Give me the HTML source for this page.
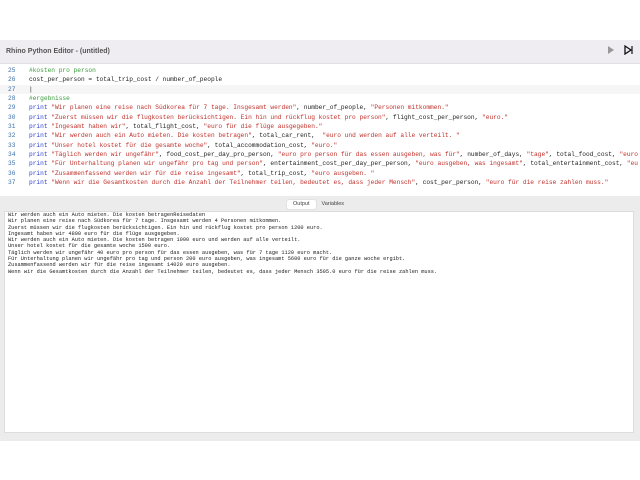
<!DOCTYPE html>
<html><head><meta charset="utf-8"><style>
body{margin:0;width:640px;height:480px;background:#fff;position:relative;overflow:hidden;font-family:"Liberation Sans",sans-serif}
.title{position:absolute;top:40px;left:0;width:640px;height:23px;background:#efedf2;border-bottom:1px solid #e2e0e6}
.title span{position:absolute;left:6px;top:8px;font-size:7px;color:#555;font-weight:bold}
.ed{position:absolute;top:66px;left:0;width:640px;font-family:"Liberation Mono",monospace;font-size:6.2px;}
.l{height:9.35px;line-height:9.35px;position:relative;white-space:pre}
.n{position:absolute;left:8px;color:#3c6fa8}
.c{position:absolute;left:29px;color:#222}
.k{color:#2a3fd0}.s{color:#c0302a}.g{color:#3a9a3a}
.hl{background:#f6f6f6}
.panel{position:absolute;top:196px;left:0;width:640px;height:245px;background:#ececec}
.tabs{position:absolute;top:200px;left:287px;height:9px;font-size:5.5px;color:#444}
.tab{display:inline-block;padding:1px 6px;line-height:7px}
.tab.a{background:#fff;border-radius:2px;box-shadow:0 0 1px #aaa}
.out{position:absolute;top:211px;left:4px;width:630px;height:222px;background:#fff;border:1px solid #ddd;font-family:"Liberation Mono",monospace;font-size:5.3px;line-height:6.3px;white-space:pre;color:#222;padding:0 0 0 3px;box-sizing:border-box}
</style></head><body>
<div class="title"><span>Rhino Python Editor - (untitled)</span>
<svg style="position:absolute;left:607px;top:5px" width="8" height="10"><path d="M1 1L7 5L1 9Z" fill="#999"/></svg>
<svg style="position:absolute;left:624px;top:5px" width="9" height="10"><path d="M1 1L7 5L1 9Z" fill="none" stroke="#111" stroke-width="1.3"/><path d="M8 1V9" stroke="#111" stroke-width="1.2"/></svg>
</div>
<div class="ed"><div class="l"><span class="n">25</span><span class="c g">#kosten pro person</span></div><div class="l"><span class="n">26</span><span class="c">cost_per_person = total_trip_cost / number_of_people</span></div><div class="l hl"><span class="n">27</span><span class="c">|</span></div><div class="l"><span class="n">28</span><span class="c g">#ergebnisse</span></div><div class="l"><span class="n">29</span><span class="c"><span class="k">print</span> <span class="s">"Wir planen eine reise nach Südkorea für 7 tage. Insgesamt werden"</span>, number_of_people, <span class="s">"Personen mitkommen."</span></span></div><div class="l"><span class="n">30</span><span class="c"><span class="k">print</span> <span class="s">"Zuerst müssen wir die flugkosten berücksichtigen. Ein hin und rückflug kostet pro person"</span>, flight_cost_per_person, <span class="s">"euro."</span></span></div><div class="l"><span class="n">31</span><span class="c"><span class="k">print</span> <span class="s">"Ingesamt haben wir"</span>, total_flight_cost, <span class="s">"euro für die flüge ausgegeben."</span></span></div><div class="l"><span class="n">32</span><span class="c"><span class="k">print</span> <span class="s">"Wir werden auch ein Auto mieten. Die kosten betragen"</span>, total_car_rent,  <span class="s">"euro und werden auf alle verteilt. "</span></span></div><div class="l"><span class="n">33</span><span class="c"><span class="k">print</span> <span class="s">"Unser hotel kostet für die gesamte woche"</span>, total_accommodation_cost, <span class="s">"euro."</span></span></div><div class="l"><span class="n">34</span><span class="c"><span class="k">print</span> <span class="s">"Täglich werden wir ungefähr"</span>, food_cost_per_day_pro_person, <span class="s">"euro pro person für das essen ausgeben, was für"</span>, number_of_days, <span class="s">"tage"</span>, total_food_cost, <span class="s">"euro</span></span></div><div class="l"><span class="n">35</span><span class="c"><span class="k">print</span> <span class="s">"Für Unterhaltung planen wir ungefähr pro tag und person"</span>, entertainment_cost_per_day_per_person, <span class="s">"euro ausgeben, was ingesamt"</span>, total_entertainment_cost, <span class="s">"eu</span></span></div><div class="l"><span class="n">36</span><span class="c"><span class="k">print</span> <span class="s">"Zusammenfassend werden wir für die reise ingesamt"</span>, total_trip_cost, <span class="s">"euro ausgeben. "</span></span></div><div class="l"><span class="n">37</span><span class="c"><span class="k">print</span> <span class="s">"Wenn wir die Gesamtkosten durch die Anzahl der Teilnehmer teilen, bedeutet es, dass jeder Mensch"</span>, cost_per_person, <span class="s">"euro für die reise zahlen muss."</span></span></div></div>
<div class="panel"></div>
<div class="tabs"><span class="tab a">Output</span><span class="tab">Variables</span></div>
<div class="out">Wir werden auch ein Auto mieten. Die kosten betragenReisedaten
Wir planen eine reise nach Südkorea für 7 tage. Insgesamt werden 4 Personen mitkommen.
Zuerst müssen wir die flugkosten berücksichtigen. Ein hin und rückflug kostet pro person 1200 euro.
Ingesamt haben wir 4800 euro für die flüge ausgegeben.
Wir werden auch ein Auto mieten. Die kosten betragen 1000 euro und werden auf alle verteilt.
Unser hotel kostet für die gesamte woche 1500 euro.
Täglich werden wir ungefähr 40 euro pro person für das essen ausgeben, was für 7 tage 1120 euro macht.
Für Unterhaltung planen wir ungefähr pro tag und person 200 euro ausgeben, was ingesamt 5600 euro für die ganze woche ergibt.
Zusammenfassend werden wir für die reise ingesamt 14020 euro ausgeben.
Wenn wir die Gesamtkosten durch die Anzahl der Teilnehmer teilen, bedeutet es, dass jeder Mensch 3505.0 euro für die reise zahlen muss.</div>
</body></html>
